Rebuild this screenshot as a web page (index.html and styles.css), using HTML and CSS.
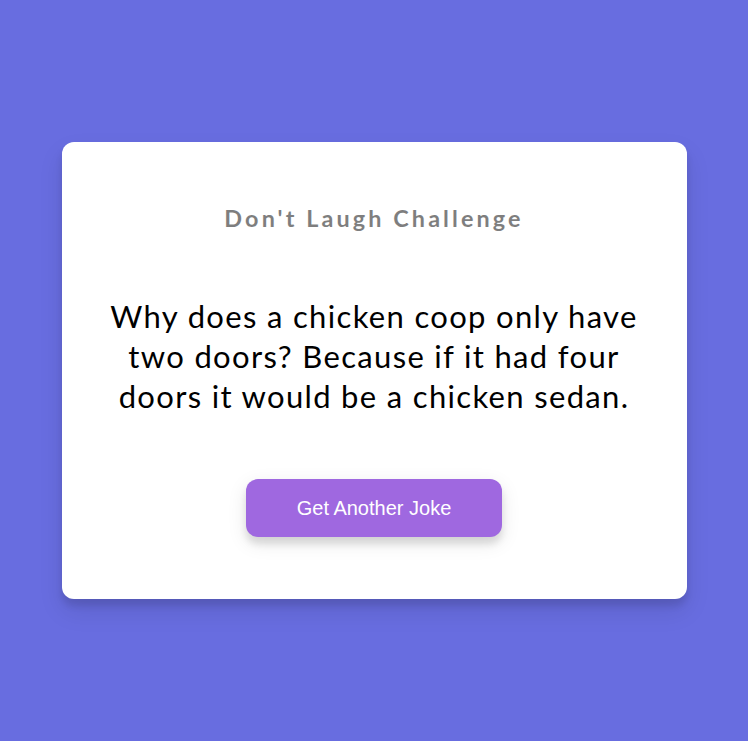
FILE: index.html
```html
<!DOCTYPE html>
<html lang="en">
<head>
<meta charset="UTF-8">
<title>Dad Jokes</title>
<link rel="stylesheet" href="styles.css">
</head>
<body>
  <div class="container">
    <h3 class="title">Don't Laugh Challenge</h3>
    <div class="joke">Why does a chicken coop only have two doors? Because if it had four doors it would be a chicken sedan.</div>
    <button class="btn">Get Another Joke</button>
  </div>
</body>
</html>
```
FILE: styles.css
```css
* { box-sizing: border-box; }

body {
  margin: 0;
  height: 100vh;
  background-color: #686de0;
  font-family: "Lato", "Noto Sans", sans-serif;
  display: flex;
  align-items: center;
  justify-content: center;
  overflow: hidden;
}

.container {
  background-color: #fff;
  border-radius: 12px;
  box-shadow: 0 12px 25px rgba(0, 0, 0, 0.1), 0 7px 7px rgba(0, 0, 0, 0.1);
  padding: 62px 25px 62px;
  text-align: center;
  width: 625px;
}

.title {
  margin: 0;
  font-size: 23.4px;
  line-height: 29px;
  font-weight: 700;
  letter-spacing: 3.1px;
  color: #000;
  opacity: 0.5;
}

.joke {
  font-size: 31px;
  letter-spacing: 1.33px;
  line-height: 40px;
  margin: 63px auto;
  max-width: 560px;
  color: #000;
}

.btn {
  background-color: #9f68e0;
  color: #fff;
  border: 0;
  border-radius: 12px;
  box-shadow: 0 6px 19px rgba(0, 0, 0, 0.1), 0 7px 7px rgba(0, 0, 0, 0.1);
  padding: 17px 51px;
  font-family: "Liberation Sans", Arial, sans-serif;
  font-size: 20px;
  line-height: 24px;
  cursor: pointer;
}
```
